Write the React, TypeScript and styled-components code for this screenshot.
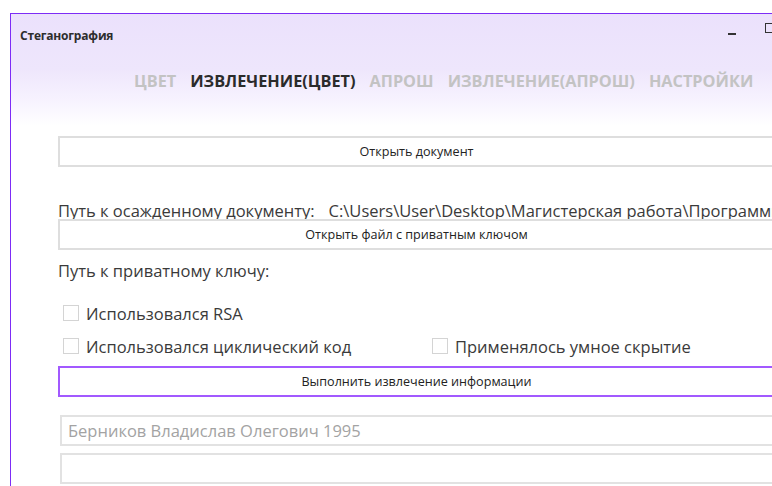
import styled, { createGlobalStyle } from "styled-components";

const GlobalStyle = createGlobalStyle`
  html, body {
    margin: 0;
    padding: 0;
    background: #ffffff;
    overflow: hidden;
  }
  body {
    font-family: "Open Sans", "Noto Sans", sans-serif;
    color: #333333;
  }
`;

const Screen = styled.div`
  width: 772px;
  height: 486px;
  overflow: hidden;
  padding: 13px 0 0 10px;
  box-sizing: border-box;
`;

const Window = styled.div`
  width: 820px;
  height: 520px;
  border-top: 1px solid #7d2cf6;
  border-left: 1px solid #7d2cf6;
  background: linear-gradient(to bottom, #ebe1fc 0px, #eee6fc 55px, #f8f4ff 90px, #ffffff 112px);
  display: flex;
  flex-direction: column;
`;

const TitleBar = styled.div`
  height: 42px;
  display: flex;
  align-items: center;
  padding-left: 9px;
`;

const Title = styled.div`
  font-size: 12px;
  font-weight: 700;
  color: #2e2e2e;
  letter-spacing: -0.2px;
  flex: 1;
`;

const WindowButtons = styled.div`
  display: flex;
  align-items: center;
  gap: 29px;
  margin-right: 56px;
  margin-top: -2px;
`;

const MinimizeGlyph = styled.div`
  width: 8px;
  height: 2px;
  background: #333333;
`;

const MaximizeGlyph = styled.div`
  width: 8px;
  height: 8px;
  border: 1.5px solid #333333;
  margin-top: -12px;
`;

const Tabs = styled.nav`
  display: flex;
  gap: 14px;
  margin-top: 12px;
  padding-left: 123px;
  height: 26px;
  align-items: center;
`;

const Tab = styled.span<{ $active?: boolean }>`
  font-size: 16.3px;
  font-weight: 700;
  letter-spacing: 0px;
  color: ${(p) => (p.$active ? "#2b2b2b" : "#c3c3c3")};
`;

const Content = styled.div`
  display: flex;
  flex-direction: column;
  padding-left: 47px;
  width: 717px;
`;

const ActionButton = styled.div<{ $mt: number; $accent?: boolean }>`
  margin-top: ${(p) => p.$mt}px;
  height: 31px;
  box-sizing: border-box;
  border: 2px solid ${(p) => (p.$accent ? "#a259ff" : "#dedede")};
  background: #ffffff;
  display: flex;
  align-items: center;
  justify-content: center;
  font-size: 12.6px;
  color: #222222;
`;

const Label = styled.div<{ $mt: number }>`
  margin-top: ${(p) => p.$mt}px;
  line-height: 16px;
  font-size: 16.5px;
  color: #3a3a3a;
  white-space: nowrap;
  display: flex;
  gap: 14px;
`;

const CheckRow = styled.div<{ $mt: number }>`
  margin-top: ${(p) => p.$mt}px;
  height: 20px;
  display: flex;
  align-items: center;
  padding-left: 5px;
`;

const CheckItem = styled.label<{ $width?: number }>`
  display: flex;
  align-items: center;
  gap: 7px;
  width: ${(p) => (p.$width ? `${p.$width}px` : "auto")};
  font-size: 16.5px;
  color: #3a3a3a;
`;

const Box = styled.span`
  width: 16px;
  height: 16px;
  flex-shrink: 0;
  box-sizing: border-box;
  border: 1px solid #d4d4d4;
  background: #ffffff;
`;

const TextBox = styled.div<{ $mt: number }>`
  margin-top: ${(p) => p.$mt}px;
  margin-left: 2px;
  height: 31px;
  box-sizing: border-box;
  border: 2px solid #e2e2e2;
  background: #ffffff;
  display: flex;
  align-items: center;
  padding-left: 6px;
  font-size: 16.5px;
  color: #a3a3a3;
`;

const tabs = ["ЦВЕТ", "ИЗВЛЕЧЕНИЕ(ЦВЕТ)", "АПРОШ", "ИЗВЛЕЧЕНИЕ(АПРОШ)", "НАСТРОЙКИ"];

export default function App() {
  return (
    <>
      <GlobalStyle />
      <Screen>
        <Window>
          <TitleBar>
            <Title>Стеганография</Title>
            <WindowButtons>
              <MinimizeGlyph />
              <MaximizeGlyph />
            </WindowButtons>
          </TitleBar>
          <Tabs>
            {tabs.map((t) => (
              <Tab key={t} $active={t === "ИЗВЛЕЧЕНИЕ(ЦВЕТ)"}>
                {t}
              </Tab>
            ))}
          </Tabs>
          <Content>
            <ActionButton $mt={42}>Открыть документ</ActionButton>
            <Label $mt={36}>
              <span>Путь к осажденному документу:</span>
              <span>C:\Users\User\Desktop\Магистерская работа\Программное</span>
            </Label>
            <ActionButton $mt={0}>Открыть файл с приватным ключом</ActionButton>
            <Label $mt={13}>Путь к приватному ключу:</Label>
            <CheckRow $mt={24}>
              <CheckItem>
                <Box />
                Использовался RSA
              </CheckItem>
            </CheckRow>
            <CheckRow $mt={13}>
              <CheckItem $width={369}>
                <Box />
                Использовался циклический код
              </CheckItem>
              <CheckItem>
                <Box />
                Применялось умное скрытие
              </CheckItem>
            </CheckRow>
            <ActionButton $mt={10} $accent>
              Выполнить извлечение информации
            </ActionButton>
            <TextBox $mt={18}>Берников Владислав Олегович 1995</TextBox>
            <TextBox $mt={7} />
          </Content>
        </Window>
      </Screen>
    </>
  );
}
